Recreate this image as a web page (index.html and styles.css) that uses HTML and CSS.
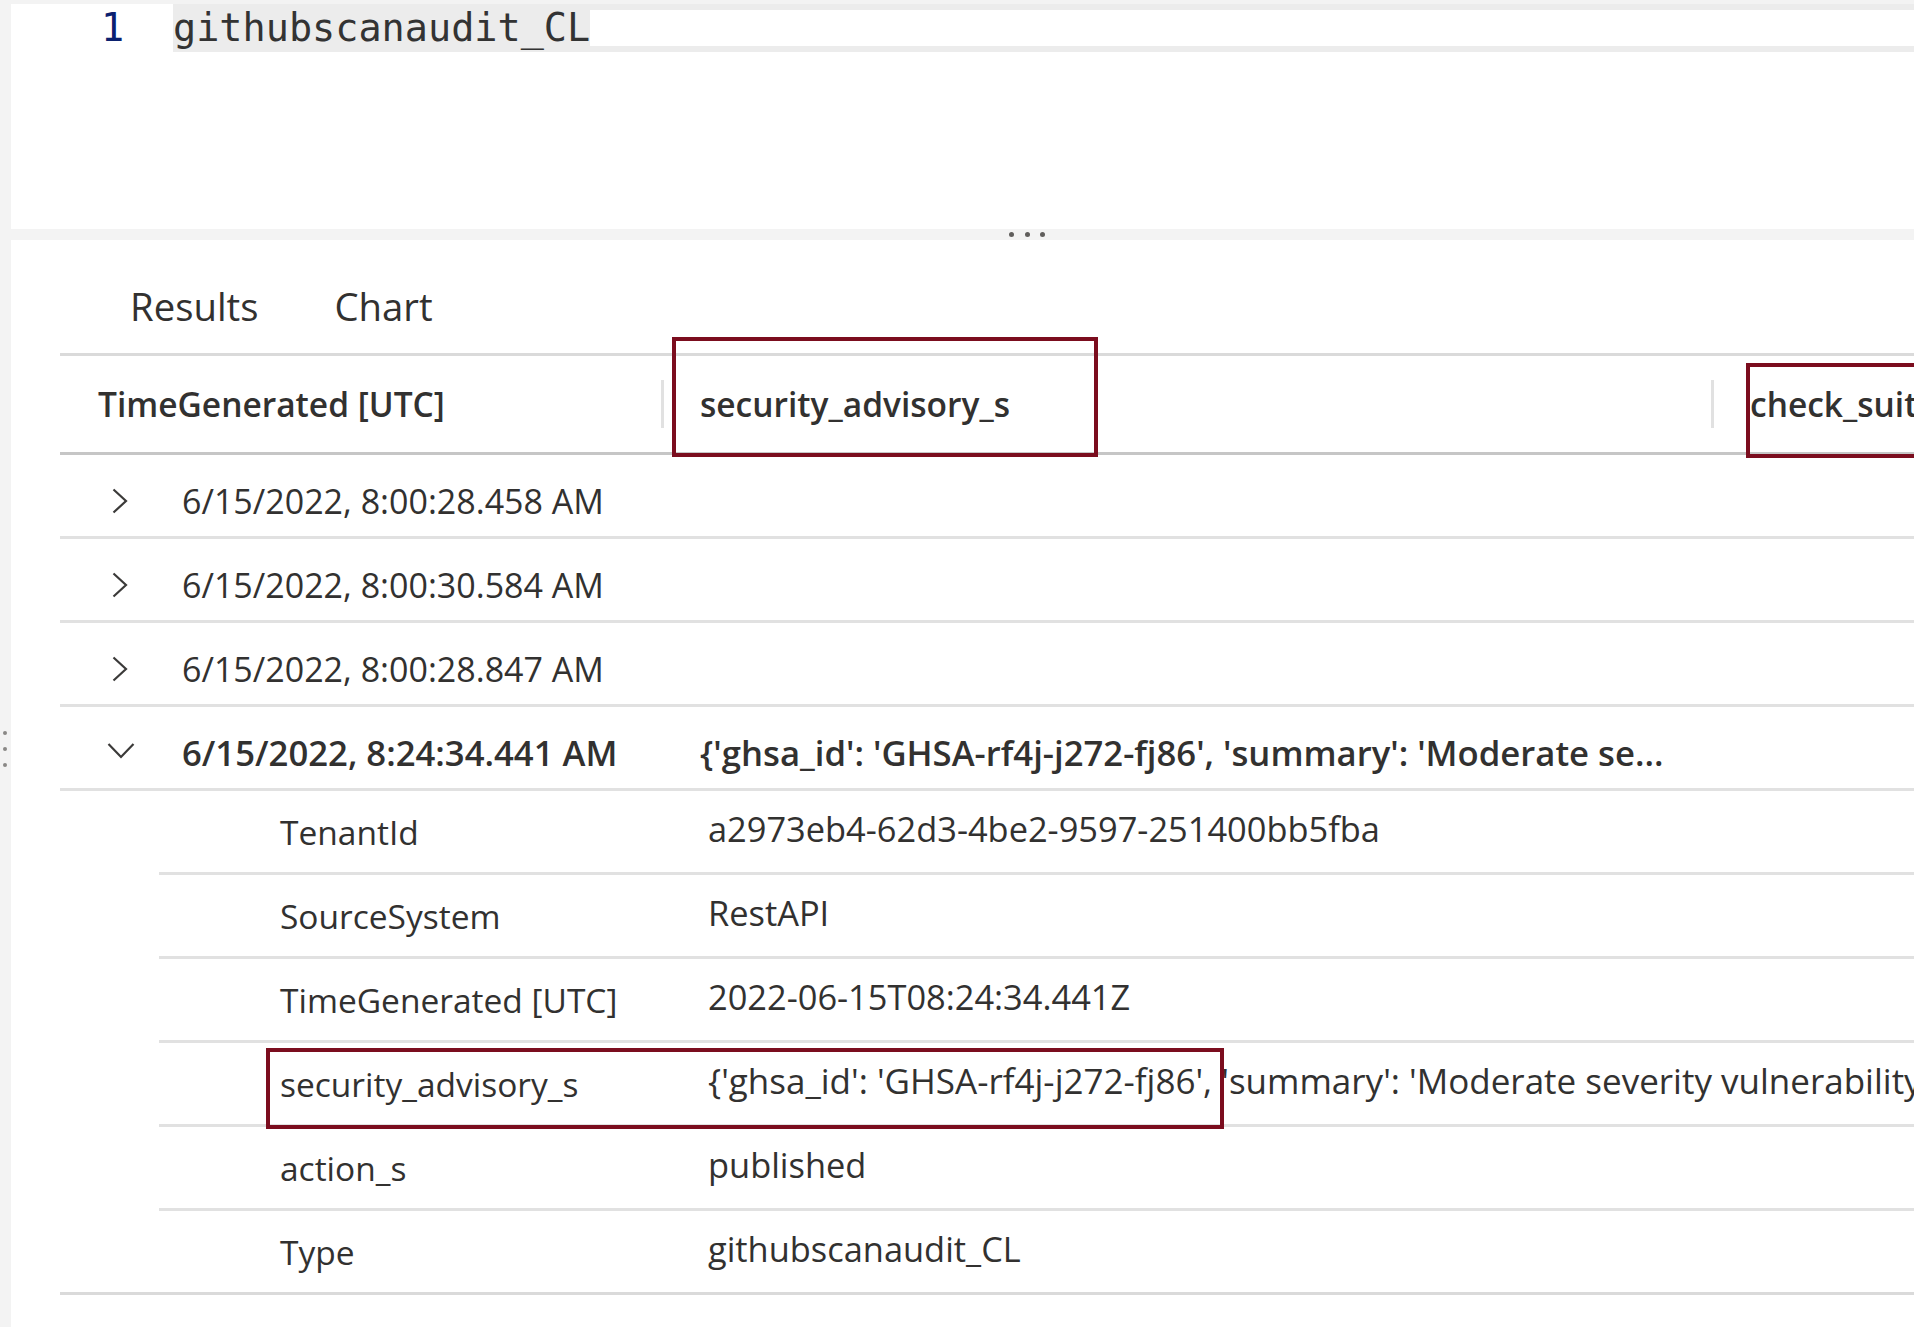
FILE: index.html
```html
<!DOCTYPE html>
<html lang="en">
<head>
<meta charset="utf-8">
<title>githubscanaudit_CL - Results</title>
<link rel="stylesheet" href="styles.css">
</head>
<body>
<div class="app">
  <aside class="rail"><span class="vdots"><i></i><i></i><i></i></span></aside>
  <main class="main">
    <section class="editor">
      <div class="code-line">
        <span class="ln">1</span>
        <div class="line-body"><span class="code">githubscanaudit_CL</span></div>
      </div>
    </section>
    <div class="splitter"><span class="hdots"><i></i><i></i><i></i></span></div>
    <section class="results">
      <nav class="tabs"><span class="tab">Results</span><span class="tab">Chart</span></nav>
      <div class="grid">
        <div class="thead">
          <div class="th c1">TimeGenerated [UTC]</div>
          <div class="sep"></div>
          <div class="th c2">security_advisory_s</div>
          <div class="sep"></div>
          <div class="th c3">check_suite_s</div>
        </div>
        <div class="row">
          <div class="rc1"><span class="chev"><svg width="16" height="26" viewBox="0 0 16 26"><path d="M1.5 1.5 L14 13 L1.5 24.5" fill="none" stroke="#3b3a39" stroke-width="2.2"/></svg></span><span class="date">6/15/2022, 8:00:28.458 AM</span></div>
          <div class="rc2"></div>
        </div>
        <div class="row">
          <div class="rc1"><span class="chev"><svg width="16" height="26" viewBox="0 0 16 26"><path d="M1.5 1.5 L14 13 L1.5 24.5" fill="none" stroke="#3b3a39" stroke-width="2.2"/></svg></span><span class="date">6/15/2022, 8:00:30.584 AM</span></div>
          <div class="rc2"></div>
        </div>
        <div class="row">
          <div class="rc1"><span class="chev"><svg width="16" height="26" viewBox="0 0 16 26"><path d="M1.5 1.5 L14 13 L1.5 24.5" fill="none" stroke="#3b3a39" stroke-width="2.2"/></svg></span><span class="date">6/15/2022, 8:00:28.847 AM</span></div>
          <div class="rc2"></div>
        </div>
        <div class="row expanded">
          <div class="rc1"><span class="chev down"><svg width="28" height="17" viewBox="0 0 28 17"><path d="M1.5 2 L14 15 L26.5 2" fill="none" stroke="#3b3a39" stroke-width="2.2"/></svg></span><span class="date">6/15/2022, 8:24:34.441 AM</span></div>
          <div class="rc2">{'ghsa_id': 'GHSA-rf4j-j272-fj86', 'summary': 'Moderate se...</div>
        </div>
        <div class="details-wrap">
          <div class="details">
            <div class="drow"><span class="dl">TenantId</span><span class="dv">a2973eb4-62d3-4be2-9597-251400bb5fba</span></div>
            <div class="drow"><span class="dl">SourceSystem</span><span class="dv">RestAPI</span></div>
            <div class="drow"><span class="dl">TimeGenerated [UTC]</span><span class="dv">2022-06-15T08:24:34.441Z</span></div>
            <div class="drow"><span class="dl">security_advisory_s</span><span class="dv dv-json">{'ghsa_id': 'GHSA-rf4j-j272-fj86', 'summary': 'Moderate severity vulnerability that affects package', 'description': 'A vulnerability was found'}</span></div>
            <div class="drow"><span class="dl">action_s</span><span class="dv">published</span></div>
            <div class="drow"><span class="dl">Type</span><span class="dv">githubscanaudit_CL</span></div>
          </div>
        </div>
      </div>
    </section>
  </main>
  <div class="mark mark-col"></div>
  <div class="mark mark-col2"></div>
  <div class="mark mark-detail"></div>
</div>
</body>
</html>
```
FILE: styles.css
```css
* { box-sizing: border-box; }
html, body { margin: 0; padding: 0; background: #fff; }
body {
  font-family: "Open Sans", "Noto Sans", "Liberation Sans", sans-serif;
  color: #323130;
  overflow: hidden;
}
.app {
  position: relative;
  display: flex;
  width: 1914px;
  height: 1327px;
  overflow: hidden;
}
.rail {
  width: 11px;
  flex: none;
  background: #f3f3f3;
  padding-top: 731px;
}
.vdots { display: flex; flex-direction: column; gap: 12px; padding-left: 3px; }
.vdots i { display: block; width: 4px; height: 4px; border-radius: 50%; background: #8a8886; }

.main { flex: 1; display: flex; flex-direction: column; min-width: 0; }

.editor {
  height: 229px;
  flex: none;
  border-top: 4px solid #f3f3f3;
  background: #fff;
}
.code-line {
  display: flex;
  height: 48px;
  padding-left: 90px;
  font-family: "DejaVu Sans Mono", "Liberation Mono", monospace;
  font-size: 38.5px;
}
.ln {
  width: 72px;
  flex: none;
  line-height: 48px;
  color: #0b216f;
}
.line-body {
  flex: 1;
  border-top: 6px solid #ececec;
  border-bottom: 6px solid #ececec;
  display: flex;
}
.code {
  background: #ececec;
  line-height: 36px;
  color: #333;
  white-space: pre;
}

.splitter {
  height: 11px;
  flex: none;
  background: #f3f3f3;
  display: flex;
  align-items: center;
  padding-left: 998px;
}
.hdots { display: flex; gap: 10.5px; }
.hdots i { display: block; width: 5px; height: 5px; border-radius: 50%; background: #605e5c; }

.results {
  flex: 1;
  padding: 40px 0 0 49px;
  font-size: 34px;
}
.tabs {
  display: flex;
  height: 52px;
  align-items: center;
  gap: 76px;
  padding-left: 70px;
  margin-bottom: 21px;
  font-size: 38.3px;
}
.tab { white-space: nowrap; }

.grid { border-top: 3px solid #dadada; }
.thead {
  display: flex;
  align-items: center;
  height: 99px;
  border-bottom: 3px solid #c6c6c6;
  font-weight: 600;
  font-size: 33.5px;
  white-space: nowrap;
}
.th.c1 { width: 601px; padding-left: 38px; flex: none; }
.th.c2 { width: 1047px; padding-left: 36px; flex: none; }
.th.c3 { padding-left: 36px; flex: none; }
.sep { width: 3px; height: 48px; background: #e1e1e1; flex: none; }

.row {
  display: flex;
  align-items: center;
  height: 84px;
  padding-top: 10px;
  border-bottom: 3px solid #e1e1e1;
  white-space: nowrap;
}
.rc1 { width: 604px; flex: none; display: flex; align-items: center; }
.rc2 { padding-left: 36px; }
.chev { width: 122px; flex: none; padding-left: 52px; display: flex; align-items: center; }
.chev svg { display: block; }
.chev.down { padding-left: 47px; padding-bottom: 4px; }
.expanded { font-weight: 600; font-size: 34.7px; }
.expanded .rc1 { width: 604px; }

.details-wrap { border-bottom: 3px solid #dadada; }
.details { margin-left: 99px; }
.drow {
  display: flex;
  align-items: center;
  height: 84px;
  border-bottom: 3px solid #e1e1e1;
  white-space: nowrap;
}
.drow:last-child { border-bottom: none; height: 81px; }
.dl { width: 549px; flex: none; padding-left: 121px; font-size: 33.5px; }
.dv { padding-bottom: 6px; font-size: 34.4px; }
.dv-json { font-size: 35px; }

.mark {
  position: absolute;
  border: 4px solid #7b0d1e;
  pointer-events: none;
}
.mark-col { left: 672px; top: 337px; width: 426px; height: 120px; }
.mark-col2 { left: 1746px; top: 363px; width: 300px; height: 95px; }
.mark-detail { left: 266px; top: 1048px; width: 958px; height: 81px; }
```
